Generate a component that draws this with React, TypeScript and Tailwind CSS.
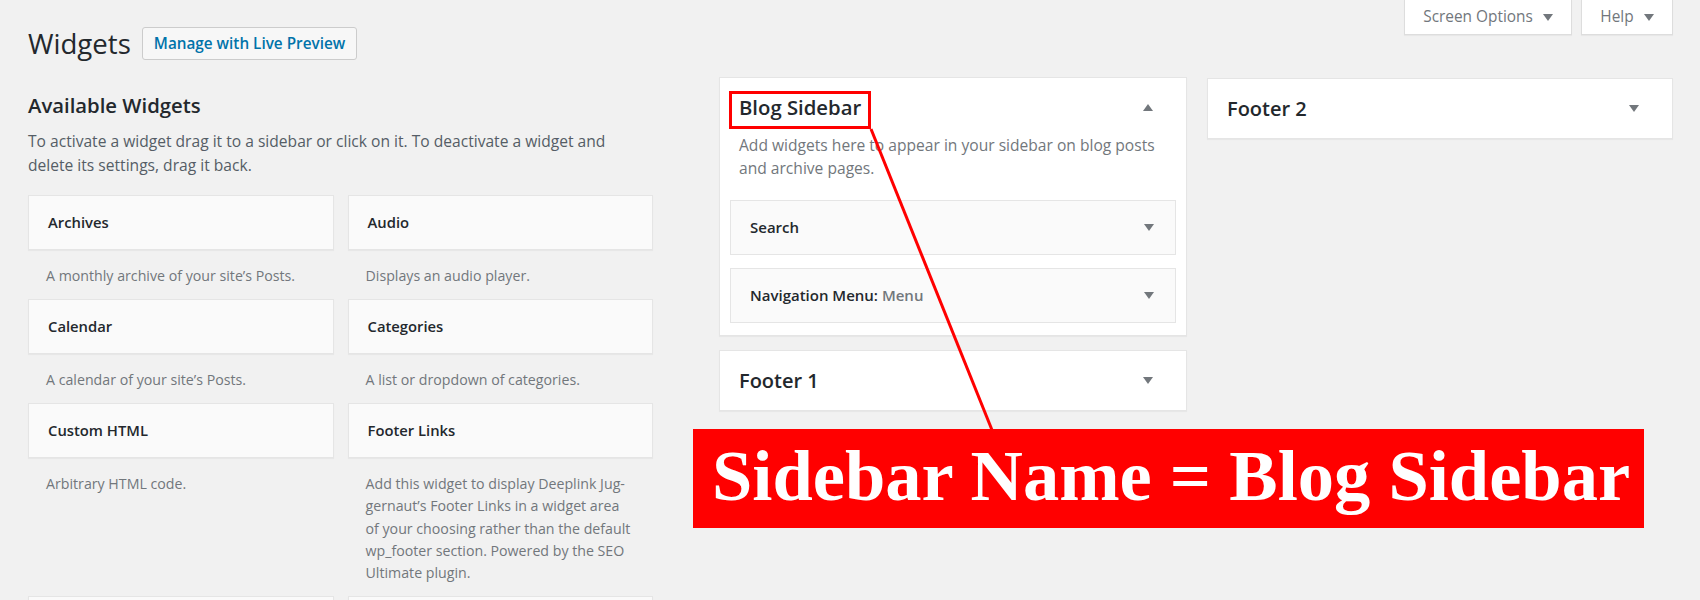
import React from 'react';

const font = { fontFamily: '"Open Sans", "Noto Sans", sans-serif' };

function Arrow({ up = false }: { up?: boolean }) {
  return (
    <svg width="10" height="7" viewBox="0 0 10 7" className="shrink-0">
      {up ? <polygon points="0,7 10,7 5,0" fill="#72777c" /> : <polygon points="0,0 10,0 5,7" fill="#72777c" />}
    </svg>
  );
}

const available = [
  { title: 'Archives', desc: ["A monthly archive of your site\u2019s Posts."] },
  { title: 'Audio', desc: ['Displays an audio player.'] },
  { title: 'Calendar', desc: ["A calendar of your site\u2019s Posts."] },
  { title: 'Categories', desc: ['A list or dropdown of categories.'] },
  { title: 'Custom HTML', desc: ['Arbitrary HTML code.'] },
  {
    title: 'Footer Links',
    desc: [
      'Add this widget to display Deeplink Jug-',
      'gernaut\u2019s Footer Links in a widget area',
      'of your choosing rather than the default',
      'wp_footer section. Powered by the SEO',
      'Ultimate plugin.',
    ],
  },
  { title: 'Gallery', desc: ['Displays an image gallery.'] },
  { title: 'Image', desc: ['Displays an image.'] },
];

function WidgetCard({ title, desc }: { title: string; desc: string[] }) {
  return (
    <div>
      <div className="h-[55px] bg-[#fafafa] border border-[#e5e5e5] shadow-[0_1px_1px_rgba(0,0,0,0.04)] flex items-center pl-[19px] text-[14.8px] font-semibold text-[#23282d]">
        {title}
      </div>
      <div className="pl-[18px] pt-[15px] pb-[11.5px] text-[14.2px] leading-[22.4px] text-[#72777c] whitespace-nowrap">
        {desc.map((l, i) => (
          <div key={i}>{l}</div>
        ))}
      </div>
    </div>
  );
}

function SidebarWidget({ title, sub }: { title: string; sub?: string }) {
  return (
    <div className="h-[55px] bg-[#fafafa] border border-[#e5e5e5] flex items-center justify-between pl-[19px] pr-[21px]">
      <span className="text-[15px] font-semibold text-[#23282d]">
        {title}
        {sub && <span className="text-[#72777c]"> {sub}</span>}
      </span>
      <Arrow />
    </div>
  );
}

function ClosedSidebar({ name }: { name: string }) {
  return (
    <div className="bg-white border border-[#e5e5e5] shadow-[0_1px_1px_rgba(0,0,0,0.04)] flex items-center justify-between pl-[19px] pr-[33px] py-[18px]">
      <h2 className="text-[20px] leading-[23px] font-semibold text-[#23282d]">{name}</h2>
      <Arrow />
    </div>
  );
}

export default function App() {
  return (
    <div className="relative min-h-[600px] bg-[#f1f1f1] text-[#23282d] overflow-hidden" style={font}>
      {/* Title row + screen meta links */}
      <div className="flex justify-between items-start pr-[27px]">
        <div className="flex items-center gap-[11px] pl-[28px] pt-[27px]">
          <h1 className="text-[27.6px] leading-[33px] font-normal">Widgets</h1>
          <button className="h-[33px] px-[11px] bg-[#f7f7f7] border border-[#cccccc] rounded-[3px] text-[15.3px] font-semibold text-[#0073aa]">
            Manage with Live Preview
          </button>
        </div>
        <div className="flex gap-[9px]">
          <button className="h-[35px] w-[168px] bg-white border-x border-b border-[#dddddd] shadow-[0_1px_1px_rgba(0,0,0,0.04)] flex items-center justify-center gap-[10px] text-[15.4px] text-[#72777c]">
            Screen Options <Arrow />
          </button>
          <button className="h-[35px] w-[92px] bg-white border-x border-b border-[#dddddd] shadow-[0_1px_1px_rgba(0,0,0,0.04)] flex items-center justify-center gap-[10px] text-[15.4px] text-[#72777c]">
            Help <Arrow />
          </button>
        </div>
      </div>

      {/* Main area */}
      <div className="flex items-start pl-[28px] mt-[17px]">
        {/* Available widgets */}
        <div className="w-[625px] shrink-0">
          <h2 className="pt-[14px] text-[20.3px] leading-[28px] font-semibold">Available Widgets</h2>
          <p className="mt-[10px] text-[15.6px] leading-[24px] text-[#555d66] whitespace-nowrap">
            To activate a widget drag it to a sidebar or click on it. To deactivate a widget and
            <br />
            delete its settings, drag it back.
          </p>
          <div className="mt-[18px] grid grid-cols-2 gap-x-[14px]">
            {available.map((w) => (
              <WidgetCard key={w.title} title={w.title} desc={w.desc} />
            ))}
          </div>
        </div>

        {/* Sidebar column 1 */}
        <div className="w-[468px] shrink-0 ml-[66px] flex flex-col gap-[14px]">
          <div className="bg-white border border-[#e5e5e5] shadow-[0_1px_1px_rgba(0,0,0,0.04)]">
            <div className="flex items-center justify-between pl-[19px] pr-[33px] pt-[18px] pb-[15px]">
              <h2 className="text-[20.3px] leading-[23px] font-semibold">Blog Sidebar</h2>
              <Arrow up />
            </div>
            <p className="px-[19px] text-[15.6px] leading-[23px] text-[#72777c] whitespace-nowrap">
              Add widgets here to appear in your sidebar on blog posts
              <br />
              and archive pages.
            </p>
            <div className="px-[10px] pt-[20px] pb-[12px] flex flex-col gap-[13px]">
              <SidebarWidget title="Search" />
              <SidebarWidget title="Navigation Menu:" sub="Menu" />
            </div>
          </div>
          <ClosedSidebar name="Footer 1" />
        </div>

        {/* Sidebar column 2 */}
        <div className="w-[466px] shrink-0 ml-[20px] mt-[1px]">
          <ClosedSidebar name="Footer 2" />
        </div>
      </div>

      {/* Annotation overlay */}
      <div className="absolute left-[729px] top-[91px] w-[142px] h-[38px] border-[3px] border-[#ff0000]" />
      <svg className="absolute left-0 top-0 pointer-events-none" width="1700" height="600">
        <line x1="871" y1="129" x2="992" y2="430" stroke="#ff0000" strokeWidth="3" />
      </svg>
      <div
        className="absolute left-[693px] top-[429px] w-[951px] h-[99px] bg-[#ff0000] flex items-center pl-[19px] pb-[5px] text-white text-[72.5px] leading-none font-bold whitespace-nowrap"
        style={{ fontFamily: '"Liberation Serif", "Times New Roman", serif' }}
      >
        Sidebar Name = Blog Sidebar
      </div>
    </div>
  );
}
